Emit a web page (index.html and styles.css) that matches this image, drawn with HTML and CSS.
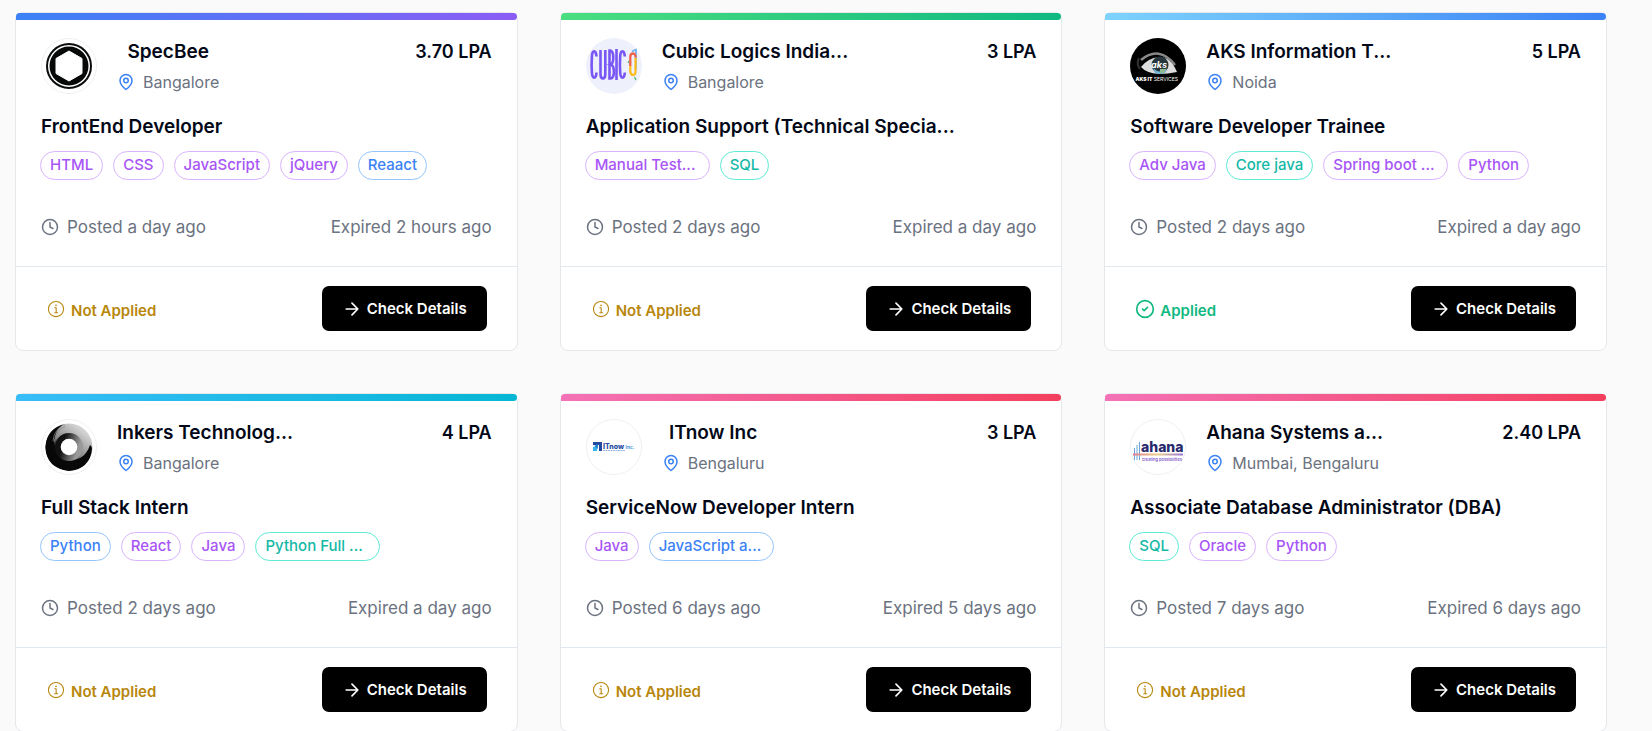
FILE: index.html
```html
<!DOCTYPE html>
<html lang="en">
<head>
<meta charset="utf-8">
<meta name="viewport" content="width=device-width, initial-scale=1">
<title>Jobs</title>
<link rel="stylesheet" href="styles.css">
</head>
<body>
<svg class="sprite" aria-hidden="true">
  <symbol id="pin" viewBox="0 0 24 24"><path d="M20 10c0 6-8 12-8 12s-8-6-8-12a8 8 0 0 1 16 0Z"/><circle cx="12" cy="10" r="3"/></symbol>
  <symbol id="clock" viewBox="0 0 24 24"><circle cx="12" cy="12" r="10"/><path d="M12 6v6l4 2"/></symbol>
  <symbol id="info" viewBox="0 0 24 24"><circle cx="12" cy="12" r="9.100"/><path d="M10.500 10.500h1.700v6M10.500 16.500h3.500"/><circle cx="12" cy="7.600" r=".4"/></symbol>
  <symbol id="check" viewBox="0 0 24 24"><circle cx="12" cy="12" r="10"/><path d="m9 12 2 2 4-4"/></symbol>
  <symbol id="arrow" viewBox="0 0 24 24"><path d="M5 12h14M12 5l7 7-7 7"/></symbol>
</svg>
<main class="jobs">
  <article class="card">
    <div class="bar bar-violet"></div>
    <div class="body">
      <header class="head">
        <svg class="logo" viewBox="0 0 56 56" role="img" aria-label="SpecBee"><circle cx="28" cy="28" r="27.500" fill="#fff" stroke="#eef0f4"/><circle cx="28" cy="28" r="22" fill="none" stroke="#0b0d0c" stroke-width="2"/><circle cx="28" cy="28" r="19.500" fill="#070908"/><path d="M28 13l13 7.500v15L28 43l-13-7.500v-15z" fill="#fff" stroke="#fff" stroke-linejoin="round"/></svg>
        <div class="company"><h2 class="name">SpecBee</h2><p class="place"><svg class="icon pin"><use href="#pin"/></svg>Bangalore</p></div>
        <p class="pay">3.70 LPA</p>
      </header>
      <h3 class="role">FrontEnd Developer</h3>
      <ul class="tags"><li class="tag purple">HTML</li><li class="tag purple">CSS</li><li class="tag purple">JavaScript</li><li class="tag purple">jQuery</li><li class="tag blue">Reaact</li></ul>
      <div class="dates"><span class="posted"><svg class="icon"><use href="#clock"/></svg>Posted a day ago</span><span>Expired 2 hours ago</span></div>
    </div>
    <footer class="foot"><span class="status"><svg class="icon thin"><use href="#info"/></svg>Not Applied</span><button class="details" type="button"><svg class="icon large"><use href="#arrow"/></svg>Check Details</button></footer>
  </article>

  <article class="card">
    <div class="bar bar-green"></div>
    <div class="body">
      <header class="head">
        <svg class="logo" viewBox="0 0 56 56" role="img" aria-label="Cubic Logics"><circle cx="28" cy="28" r="28" fill="#eef1fb"/><g fill="none" stroke="#7857f5" stroke-width="2.600"><path d="M10.500 18.500c-.5-7-4.300-7-4.600 0-.4 6-.4 11 0 16 .3 7 4.300 7 4.600 0"/><path d="M14.500 12v24c0 6 4.800 6 4.800 0V12"/><path d="M23.500 12.500v28h1.200c4.500-1 4-13 0-14 3.500-1.500 3.500-13-.3-14z"/><path d="M30.500 11v31"/><path d="M38.800 18.500c-.5-7-4.300-7-4.600 0-.4 6-.4 11 0 16 .3 7 4.300 7 4.600 0"/></g><path d="M46 13.500l4-2v20" fill="none" stroke="#6bb1ee" stroke-width="1.600"/><path d="M44.300 28v-9q0-3.500 2.700-3.500t2.500 4" fill="none" stroke="#f2604a" stroke-width="2.300"/><path d="M44.300 28v5q0 4 2.700 4t2.500-4V20" fill="none" stroke="#fdbc1d" stroke-width="2.300"/><path d="M48.500 39l1.500 3M43 23l-1 2" stroke="#56b96b" stroke-width="1.300"/></svg>
        <div class="company"><h2 class="name">Cubic Logics India...</h2><p class="place"><svg class="icon pin"><use href="#pin"/></svg>Bangalore</p></div>
        <p class="pay">3 LPA</p>
      </header>
      <h3 class="role">Application Support (Technical Specia...</h3>
      <ul class="tags"><li class="tag purple long">Manual Test...</li><li class="tag teal">SQL</li></ul>
      <div class="dates"><span class="posted"><svg class="icon"><use href="#clock"/></svg>Posted 2 days ago</span><span>Expired a day ago</span></div>
    </div>
    <footer class="foot"><span class="status"><svg class="icon thin"><use href="#info"/></svg>Not Applied</span><button class="details" type="button"><svg class="icon large"><use href="#arrow"/></svg>Check Details</button></footer>
  </article>

  <article class="card">
    <div class="bar bar-sky"></div>
    <div class="body">
      <header class="head">
        <svg class="logo" viewBox="0 0 56 56" role="img" aria-label="AKS IT Services"><circle cx="28" cy="28" r="28" fill="#000"/><path d="M11 22q18-15 34 5" fill="none" stroke="#888" stroke-width="2.500"/><path d="M9 20q-3 6 1 11" fill="none" stroke="#333" stroke-width="2"/><path d="M11 29q7-9 18-10 12 0 18 15-9 2-18 2-13-1-18-7z" fill="#dedede"/><circle cx="30" cy="27" r="8.500" fill="#26363b"/><path d="M23 30q7 7 14 0l-2 5q-5 2-10 0z" fill="#72b4d5"/><path d="M30 31h6l-2 4h-4z" fill="#91ba92"/><text x="29" y="30" class="mark eye">aks</text><text x="5.500" y="43" class="mark aks"><tspan font-weight="900">AKS IT</tspan> SERVICES</text></svg>
        <div class="company"><h2 class="name">AKS Information T...</h2><p class="place"><svg class="icon pin"><use href="#pin"/></svg>Noida</p></div>
        <p class="pay">5 LPA</p>
      </header>
      <h3 class="role">Software Developer Trainee</h3>
      <ul class="tags"><li class="tag purple">Adv Java</li><li class="tag teal">Core java</li><li class="tag purple long">Spring boot ...</li><li class="tag purple">Python</li></ul>
      <div class="dates"><span class="posted"><svg class="icon"><use href="#clock"/></svg>Posted 2 days ago</span><span>Expired a day ago</span></div>
    </div>
    <footer class="foot"><span class="status applied"><svg class="icon large"><use href="#check"/></svg>Applied</span><button class="details" type="button"><svg class="icon large"><use href="#arrow"/></svg>Check Details</button></footer>
  </article>

  <article class="card">
    <div class="bar bar-cyan"></div>
    <div class="body">
      <header class="head">
        <svg class="logo" viewBox="0 0 56 56" role="img" aria-label="Inkers"><defs><linearGradient id="ink" x1="1" y1="0" x2=".2" y2="1"><stop offset=".2" stop-color="#d2d2d2"/><stop offset=".55" stop-color="#888"/><stop offset=".7" stop-color="#080808"/></linearGradient><linearGradient id="ring" x1="0" y1="0" x2="1" y2=".3"><stop offset=".3" stop-color="#111"/><stop offset="1" stop-color="#999"/></linearGradient></defs><circle cx="28" cy="28" r="27.500" fill="#fff" stroke="#eef0f4"/><circle cx="28" cy="28" r="23.500" fill="url(#ink)"/><path d="M24 5q-10 3-11 20 2 13 14 16 16 2 22-15 2 1 2 4-2 20-23 22Q5 49 4.500 28 6 9 24 5z" fill="#080808"/><path d="M20 8q-7 4-8 14M24 7q-9 4-11 16" fill="none" stroke="#888" stroke-width=".7"/><circle cx="28" cy="28" r="11" fill="none" stroke="url(#ring)" stroke-width="6"/><circle cx="28" cy="28" r="8.300" fill="#fff"/></svg>
        <div class="company"><h2 class="name">Inkers Technolog...</h2><p class="place"><svg class="icon pin"><use href="#pin"/></svg>Bangalore</p></div>
        <p class="pay">4 LPA</p>
      </header>
      <h3 class="role">Full Stack Intern</h3>
      <ul class="tags"><li class="tag blue">Python</li><li class="tag purple">React</li><li class="tag purple">Java</li><li class="tag teal long">Python Full ...</li></ul>
      <div class="dates"><span class="posted"><svg class="icon"><use href="#clock"/></svg>Posted 2 days ago</span><span>Expired a day ago</span></div>
    </div>
    <footer class="foot"><span class="status"><svg class="icon thin"><use href="#info"/></svg>Not Applied</span><button class="details" type="button"><svg class="icon large"><use href="#arrow"/></svg>Check Details</button></footer>
  </article>

  <article class="card">
    <div class="bar bar-rose"></div>
    <div class="body">
      <header class="head">
        <svg class="logo" viewBox="0 0 56 56" role="img" aria-label="ITnow Inc."><circle cx="28" cy="28" r="27.500" fill="#fff" stroke="#eef0f4"/><path d="M7 23h9v9h-3v-6H7z" fill="#234a9e"/><path d="M7 28h4v4H7z" fill="#35b6ec"/><path d="M8 27l4-2v5z" fill="#2885c9"/><text x="17" y="29.500" class="mark itnow">ITnow</text><text x="39.500" y="29.500" class="mark inc">Inc.</text><path d="M17 31.500h22" stroke="#9ab8df" stroke-dasharray="2 .5"/></svg>
        <div class="company"><h2 class="name">ITnow Inc</h2><p class="place"><svg class="icon pin"><use href="#pin"/></svg>Bengaluru</p></div>
        <p class="pay">3 LPA</p>
      </header>
      <h3 class="role">ServiceNow Developer Intern</h3>
      <ul class="tags"><li class="tag purple">Java</li><li class="tag blue long">JavaScript a...</li></ul>
      <div class="dates"><span class="posted"><svg class="icon"><use href="#clock"/></svg>Posted 6 days ago</span><span>Expired 5 days ago</span></div>
    </div>
    <footer class="foot"><span class="status"><svg class="icon thin"><use href="#info"/></svg>Not Applied</span><button class="details" type="button"><svg class="icon large"><use href="#arrow"/></svg>Check Details</button></footer>
  </article>

  <article class="card">
    <div class="bar bar-rose"></div>
    <div class="body">
      <header class="head">
        <svg class="logo" viewBox="0 0 56 56" role="img" aria-label="Ahana"><defs><linearGradient id="rainbow"><stop stop-color="#e27a8c"/><stop offset=".5" stop-color="#ecd08c"/><stop offset="1" stop-color="#9a75d8"/></linearGradient></defs><circle cx="28" cy="28" r="27.500" fill="#fff" stroke="#eef0f4"/><path d="M4.500 29v12M7 26v15M9.500 23v18" stroke="#6aa7d8"/><rect x="3" y="34.500" width="50" height="2" fill="url(#rainbow)"/><text x="11" y="33" class="mark ahana">ahana</text><text x="12" y="41.500" class="mark slogan">creating possibilities</text></svg>
        <div class="company"><h2 class="name">Ahana Systems a...</h2><p class="place"><svg class="icon pin"><use href="#pin"/></svg>Mumbai, Bengaluru</p></div>
        <p class="pay">2.40 LPA</p>
      </header>
      <h3 class="role">Associate Database Administrator (DBA)</h3>
      <ul class="tags"><li class="tag teal">SQL</li><li class="tag purple">Oracle</li><li class="tag purple">Python</li></ul>
      <div class="dates"><span class="posted"><svg class="icon"><use href="#clock"/></svg>Posted 7 days ago</span><span>Expired 6 days ago</span></div>
    </div>
    <footer class="foot"><span class="status"><svg class="icon thin"><use href="#info"/></svg>Not Applied</span><button class="details" type="button"><svg class="icon large"><use href="#arrow"/></svg>Check Details</button></footer>
  </article>
</main>
</body>
</html>
```
FILE: styles.css
```css
* { box-sizing: border-box; }
body { margin: 0; background: #fafafa; color: #020817; font-family: Inter, "Liberation Sans", sans-serif; }
h2, h3, p, ul { margin: 0; padding: 0; }
.sprite { display: none; }

.jobs {
  display: grid;
  grid-template-columns: repeat(3, minmax(0, 1fr));
  gap: 42px;
  padding: 12px 45px 0 15px;
}
.card {
  background: #fff;
  border: 1px solid #e5e7eb;
  border-radius: 8px;
}
.bar { height: 7px; border-radius: 5px 5px 5px 0; }
.bar-violet { background: linear-gradient(to right, #3b82f6, #8b5cf6); }
.bar-green { background: linear-gradient(to right, #4ade80, #10b981); }
.bar-sky { background: linear-gradient(to right, #7dd3fc, #3b82f6); }
.bar-cyan { background: linear-gradient(to right, #38bdf8, #06b6d4); }
.bar-rose { background: linear-gradient(to right, #f472b6, #f43f5e); }

.body { padding: 18px 25px 26px; border-bottom: 1px solid #e2e8f0; }
.head { display: flex; align-items: flex-start; }
.logo { width: 56px; height: 56px; flex: none; margin-right: 20px; }
.name, .role { font-size: 19px; line-height: 28px; font-weight: 600; }
.name { text-align: center; }
.place {
  display: flex;
  align-items: center;
  gap: 8px;
  margin-top: 4px;
  font-size: 16px;
  line-height: 24px;
  color: #6b7280;
}
.pay { margin-left: auto; font-size: 18px; line-height: 27px; font-weight: 600; }
.role { margin-top: 19px; }

.icon {
  width: 18px;
  height: 18px;
  flex: none;
  fill: none;
  stroke: currentColor;
  stroke-width: 2;
  stroke-linecap: round;
  stroke-linejoin: round;
}
.pin { color: #3b82f6; }
.thin, .large { width: 20px; height: 20px; }
.thin { stroke-width: 1.3; }

.tags { display: flex; flex-wrap: wrap; gap: 10px; margin: 10px -1px 0; list-style: none; }
.tag { padding: 1px 9px 3px; border: 1px solid; border-radius: 15px; font-size: 15px; line-height: 23px; font-weight: 500; }
.long { width: 125px; }
.purple { color: #a855f7; border-color: #d8b4fe; }
.blue { color: #3b82f6; border-color: #93c5fd; }
.teal { color: #14b8a6; border-color: #5eead4; }

.dates { display: flex; justify-content: space-between; margin-top: 34px; font-size: 17px; line-height: 26px; color: #6b7280; }
.posted { display: flex; align-items: center; gap: 8px; }

.foot { display: flex; align-items: center; justify-content: space-between; padding: 19px 30px; }
.status { display: flex; align-items: flex-end; gap: 5px; font-size: 15px; line-height: 16px; font-weight: 600; color: #b8860b; }
.applied { color: #10b981; }
.details {
  display: flex;
  align-items: center;
  gap: 5px;
  height: 45px;
  padding: 0 20px;
  border: 0;
  border-radius: 7px;
  background: #000;
  color: #fff;
  font: 600 15px Inter, "Liberation Sans", sans-serif;
}

.mark { font-family: Inter, sans-serif; }
.eye { font-size: 9px; font-style: italic; font-weight: 700; fill: #fff; text-anchor: middle; }
.aks { font-size: 5px; fill: #fff; }
.itnow { font-size: 7px; font-weight: 800; fill: #234a9e; }
.inc { font-size: 5px; font-weight: 700; fill: #4b9be0; }
.ahana { font-size: 14px; font-weight: 800; fill: #29296e; }
.slogan { font-size: 4px; font-weight: 600; fill: #8058c8; }
```
